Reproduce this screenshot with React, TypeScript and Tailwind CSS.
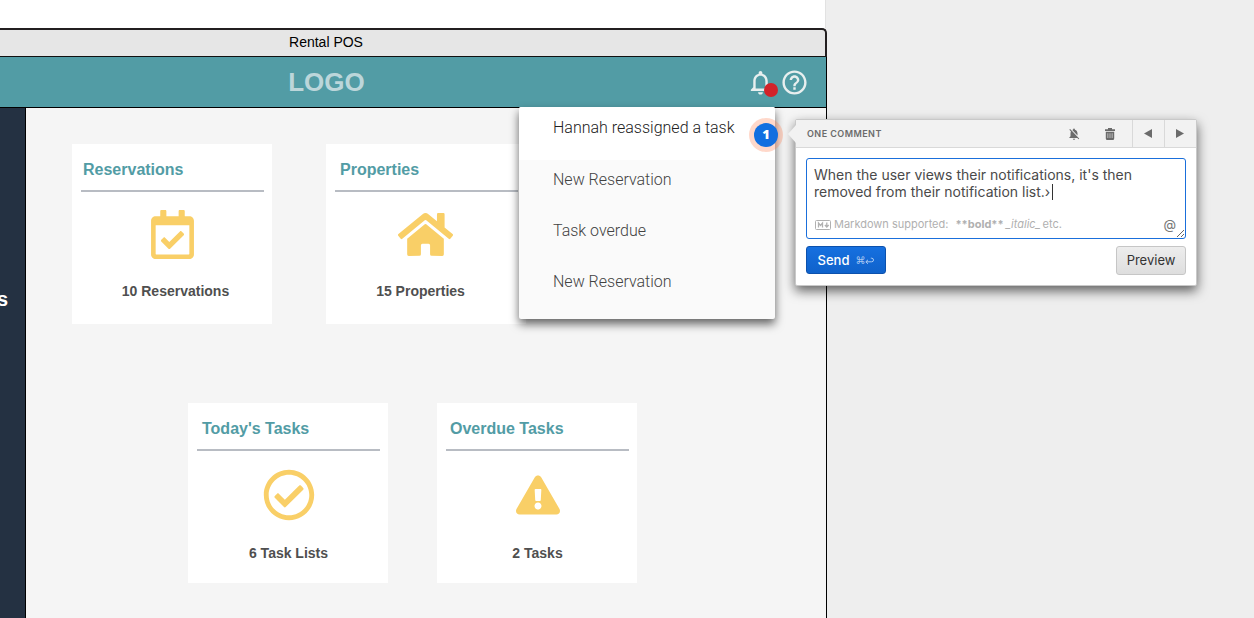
import type { ReactNode } from 'react';
import {
  FaExclamationTriangle,
  FaHome,
  FaRegCalendarCheck,
  FaRegCheckCircle,
} from 'react-icons/fa';
import { MdHelpOutline, MdNotificationsNone, MdNotificationsOff } from 'react-icons/md';

type CardProps = {
  title: string;
  summary: string;
  titleInset?: string;
  iconInset?: string;
  summaryInset: string;
  children: ReactNode;
};

function Card({ title, summary, titleInset = 'pl-[5px]', iconInset = 'pb-0', summaryInset, children }: CardProps) {
  return (
    <section className="flex h-[180px] w-[200px] shrink-0 flex-col bg-white pt-[14px] pr-2 pl-[9px]">
      <h2 className={`h-[34px] border-b-2 border-[#b8bcc3] text-base leading-6 font-bold text-[#529ca5] ${titleInset}`}>
        {title}
      </h2>
      <div className={`flex h-[88px] items-center justify-center text-[#f9cf67] ${iconInset}`}>{children}</div>
      <p className={`text-center text-sm leading-[22px] font-bold text-[#4f4f4f] ${summaryInset}`}>{summary}</p>
    </section>
  );
}

function TrashIcon() {
  return (
    <svg viewBox="0 0 10 12" className="h-3 w-[10px]" fill="currentColor">
      <path d="M3 0h4v1.300h3V3H0V1.300h3z" />
      <path
        fillRule="evenodd"
        d="M.8 3.800h8.400v6.700A1.500 1.500 0 0 1 7.700 12H2.300A1.500 1.500 0 0 1 .8 10.500zM2.600 5.200v4.800h.6V5.200zm2.100 0v4.800h.6V5.200zm2.100 0v4.800h.6V5.200z"
      />
    </svg>
  );
}

function MarkdownIcon() {
  return (
    <svg viewBox="0 0 16 10" className="h-[10px] w-4 shrink-0" fill="none" stroke="currentColor">
      <rect x=".5" y=".5" width="15" height="9" rx="1" />
      <path d="M3.500 7.500V3l2 2.400L7.500 3v4.500M11.800 2.500v4M9.900 5l1.900 2 1.900-2" strokeWidth="1.300" />
    </svg>
  );
}

function ReturnIcon() {
  return (
    <svg viewBox="0 0 9 8" className="h-2 w-[9px]" fill="none" stroke="currentColor">
      <path d="M3 2.800.8 4.800 3 6.800M1 4.800h5.700a1.800 1.800 0 0 0 0-3.600H5.800" />
    </svg>
  );
}

function CommentPopover() {
  return (
    <form
      className="absolute top-[12px] left-full ml-5 w-[402px] rounded-[2px] border border-[#c9c9c9] bg-white font-['Inter',sans-serif] text-[#4a4a4a] shadow-[0_5px_12px_rgba(0,0,0,0.6)]"
      onSubmit={(e) => e.preventDefault()}
    >
      <svg viewBox="0 0 8 18" className="absolute top-[5px] -left-2 h-[18px] w-2" fill="#f2f2f2">
        <path d="M8 0v18L0 9z" />
      </svg>
      <header className="flex h-7 items-stretch border-b border-[#d9d9d9] bg-[#f2f2f2] text-[#6b6b6b]">
        <h2 className="flex flex-1 items-center pt-px pl-[11px] text-[9px] font-semibold tracking-wider">ONE COMMENT</h2>
        <button type="button" aria-label="Mute" className="flex w-9 items-center justify-center">
          <MdNotificationsOff className="size-[14px]" />
        </button>
        <button type="button" aria-label="Delete" className="mr-1 flex w-9 items-center justify-center">
          <TrashIcon />
        </button>
        <button type="button" aria-label="Previous" className="flex w-8 items-center justify-center border-l border-[#d9d9d9] pr-px">
          <svg viewBox="0 0 8 9" className="h-[9px] w-2" fill="currentColor"><path d="M8 0v9L0 4.500z" /></svg>
        </button>
        <button type="button" aria-label="Next" className="flex w-8 items-center justify-center border-l border-[#d9d9d9] pr-px">
          <svg viewBox="0 0 8 9" className="h-[9px] w-2" fill="currentColor"><path d="M0 0v9l8-4.500z" /></svg>
        </button>
      </header>
      <div className="p-[10px]">
        <div className="relative">
          <textarea
            aria-label="Comment"
            className="block h-[81px] w-full resize rounded-[3px] border border-[#1a6fdb] bg-white px-[7px] pt-[7px] text-sm leading-[17px] text-[#4a4a4a] outline-none"
            defaultValue={"When the user views their notifications, it's then removed from their notification list.›"}
          />
          <span className="absolute top-[26px] left-[246px] h-4 w-px bg-[#333]" />
          <p className="pointer-events-none absolute right-[10px] bottom-[7px] left-[9px] flex items-center text-[11px] leading-[15px] text-[#b0b0b0]">
            <MarkdownIcon />
            <span className="ml-[3px]">Markdown supported:</span>
            <span className="ml-[7px] font-bold">**bold**</span>
            <span className="ml-[2px] italic">_italic_</span>
            <span className="ml-[2px] flex-1">etc.</span>
            <span className="text-[13px] text-[#777]">@</span>
          </p>
        </div>
        <div className="flex items-start justify-between pt-[7px]">
          <button
            type="submit"
            className="flex h-7 w-20 items-center justify-center gap-[6px] rounded-[3px] border border-[#0c51ad] bg-linear-to-b from-[#1670e0] to-[#0f62cb] pt-px text-[13px] font-medium text-white"
          >
            Send
            <span className="flex items-center font-['DejaVu_Sans',sans-serif] text-[10px] font-normal text-[#a9c9f2]">
              ⌘<ReturnIcon />
            </span>
          </button>
          <button
            type="button"
            className="h-[29px] w-[70px] rounded-[3px] border border-[#c6c6c6] bg-linear-to-b from-[#ededed] to-[#dedede] pt-px text-[13px] text-[#333]"
          >
            Preview
          </button>
        </div>
      </div>
    </form>
  );
}

function NotificationMenu() {
  return (
    <div className="absolute top-[50px] right-[51px] z-10 w-64">
      <ul className="h-[212px] overflow-hidden rounded-[2px] bg-[#fafafa] font-['Roboto',sans-serif] text-base leading-5 font-light text-[#424242]">
        <li className="h-[53px] bg-white pt-[11px] pl-[34px] text-[#212121]">Hannah reassigned a task</li>
        <li className="h-[51px] pt-[10px] pl-[34px]">New Reservation</li>
        <li className="h-[51px] pt-[10px] pl-[34px]">Task overdue</li>
        <li className="h-[51px] pt-[10px] pl-[34px]">New Reservation</li>
      </ul>
      <div className="pointer-events-none absolute inset-0 rounded-[2px] shadow-[0_5px_10px_rgba(0,0,0,0.6)]" />
      <button
        type="button"
        className="absolute top-[11px] -right-2 flex size-[34px] items-center justify-center rounded-full bg-[#ff7f50]/30"
      >
        <span className="flex size-6 items-center justify-center rounded-full bg-[#126fe0] font-['Open_Sans',sans-serif] text-[13px] font-extrabold text-white">
          1
        </span>
      </button>
      <CommentPopover />
    </div>
  );
}

export default function App() {
  return (
    <div className="flex min-h-screen overflow-hidden bg-[#eeeeee] font-['Liberation_Sans',Arial,sans-serif]">
      <div className="relative z-10 flex min-w-0 flex-1 flex-col">
        <div className="mr-px h-7 border-r border-[#e2e2e2] bg-white" />
        <div className="flex h-[29px] items-center justify-center rounded-tr-[5px] border-t-2 border-r-2 border-b border-[#231f20] border-b-[#111] bg-[#e6e6e6] pr-[173px] pb-[2px] text-sm text-black">
          Rental POS
        </div>
        <header className="relative flex h-[51px] items-center border-r border-b border-black bg-[#529ca5]">
          <div className="flex-1 pl-[159px] text-center text-[26px] leading-9 font-bold text-[#bcd6da]">LOGO</div>
          <div className="flex gap-[5px] pr-[17px] pl-[252px] text-[#e8efef]">
            <button type="button" aria-label="Notifications" className="relative">
              <MdNotificationsNone className="size-[29px]" />
              <span className="absolute right-[-3px] bottom-0 size-[14px] rounded-full bg-[#d2232a]" />
            </button>
            <button type="button" aria-label="Help">
              <MdHelpOutline className="size-[29px]" />
            </button>
          </div>
          <NotificationMenu />
        </header>
        <div className="flex flex-1 border-r border-black bg-[#f5f5f5]">
          <nav className="w-[26px] shrink-0 overflow-hidden border-r border-black bg-[#243142] pt-[179px] text-xl leading-6 font-bold text-white">
            <span className="-ml-[3px]">s</span>
          </nav>
          <main className="flex flex-col gap-[79px] pt-9">
            <div className="flex gap-[54px] pl-[46px]">
              <Card
                title="Reservations"
                summary="10 Reservations"
                titleInset="pl-[2px]"
                iconInset="pb-1"
                summaryInset="pl-[6px]"
              >
                <FaRegCalendarCheck className="size-[49px]" />
              </Card>
              <Card title="Properties" summary="15 Properties" iconInset="pr-[2px] pb-1" summaryInset="pr-3">
                <FaHome className="size-[55px]" />
              </Card>
            </div>
            <div className="flex gap-[49px] pl-[162px]">
              <Card title="Today's Tasks" summary="6 Task Lists" summaryInset="pt-[3px]">
                <FaRegCheckCircle className="size-[52px]" />
              </Card>
              <Card title="Overdue Tasks" summary="2 Tasks" titleInset="pl-1" summaryInset="pt-[3px]">
                <FaExclamationTriangle className="size-[44px]" />
              </Card>
            </div>
          </main>
        </div>
      </div>
      <aside className="w-[427px] shrink-0 bg-[#eeeeee]" />
    </div>
  );
}
